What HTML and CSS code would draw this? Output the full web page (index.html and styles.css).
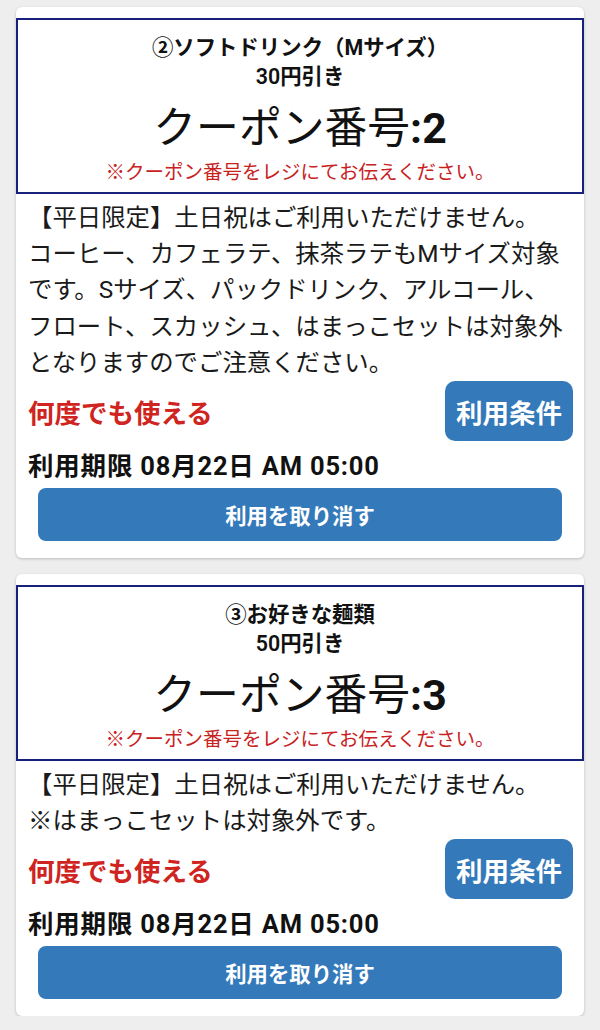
FILE: index.html
```html
<!DOCTYPE html>
<html lang="ja">
<head>
<meta charset="utf-8">
<title>クーポン</title>
<link rel="stylesheet" href="styles.css">
</head>
<body>
<main class="list">
  <section class="card">
    <div class="coupon-box">
      <div class="coupon-title">②ソフトドリンク（Mサイズ）</div>
      <div class="coupon-discount">30円引き</div>
      <div class="coupon-number">クーポン番号<b>:2</b></div>
      <div class="coupon-note">※クーポン番号をレジにてお伝えください。</div>
    </div>
    <div class="card-body">
      <p class="desc">【平日限定】土日祝はご利用いただけません。<br>コーヒー、カフェラテ、抹茶ラテもMサイズ対象です。Sサイズ、パックドリンク、アルコール、フロート、スカッシュ、はまっこセットは対象外となりますのでご注意ください。</p>
      <div class="usage-row">
        <span class="usage">何度でも使える</span>
        <button class="btn btn-terms">利用条件</button>
      </div>
      <div class="deadline">利用期限 08月22日 AM 05:00</div>
      <button class="btn btn-cancel">利用を取り消す</button>
    </div>
  </section>

  <section class="card">
    <div class="coupon-box">
      <div class="coupon-title">③お好きな麺類</div>
      <div class="coupon-discount">50円引き</div>
      <div class="coupon-number">クーポン番号<b>:3</b></div>
      <div class="coupon-note">※クーポン番号をレジにてお伝えください。</div>
    </div>
    <div class="card-body">
      <p class="desc">【平日限定】土日祝はご利用いただけません。<br>※はまっこセットは対象外です。</p>
      <div class="usage-row">
        <span class="usage">何度でも使える</span>
        <button class="btn btn-terms">利用条件</button>
      </div>
      <div class="deadline">利用期限 08月22日 AM 05:00</div>
      <button class="btn btn-cancel">利用を取り消す</button>
    </div>
  </section>
</main>
</body>
</html>
```

FILE: styles.css
```css
html, body {
  margin: 0;
  padding: 0;
  background: #eeeeee;
}

body {
  font-family: Roboto, "Noto Sans CJK JP", sans-serif;
  color: #1a1a1a;
}

.list {
  display: flex;
  flex-direction: column;
  gap: 16px;
  padding: 7px 16px 0 16px;
}

.card {
  background: #ffffff;
  border-radius: 6px;
  box-shadow: 0 1px 3px rgba(0, 0, 0, 0.22);
  padding: 11px 0 17px 0;
}

.coupon-box {
  border: 2px solid #17217c;
  padding: 12px 8px 6px 8px;
  text-align: center;
  color: #111;
}

.coupon-title {
  font-size: 21.4px;
  font-weight: 700;
  line-height: 32px;
}

.coupon-discount {
  font-size: 21.4px;
  font-weight: 600;
  line-height: 26px;
}

.coupon-number {
  font-size: 42.8px;
  line-height: 64px;
  margin-top: 6px;
  font-weight: 400;
}

.coupon-number b {
  font-weight: 700;
}

.coupon-note {
  font-size: 19.5px;
  line-height: 26px;
  color: #c8221f;
}

.card-body {
  padding: 6px 12px 0 12px;
  display: flex;
  flex-direction: column;
}

.desc {
  margin: 0;
  font-size: 24.4px;
  line-height: 36.2px;
  color: #1a1a1a;
}

.usage-row {
  display: flex;
  justify-content: space-between;
  align-items: center;
}

.usage {
  font-size: 26.5px;
  font-weight: 700;
  color: #cf2420;
}

.btn {
  border: none;
  background: #3479b9;
  color: #ffffff;
  font-family: Roboto, "Noto Sans CJK JP", sans-serif;
  font-weight: 700;
  cursor: pointer;
}

.btn-terms {
  height: 60px;
  padding: 0 11px;
  border-radius: 10px;
  font-size: 26.5px;
  margin-right: -1px;
}

.deadline {
  margin-top: 7px;
  font-size: 25.5px;
  letter-spacing: 0.8px;
  line-height: 36px;
  font-weight: 700;
  color: #111;
}

.btn-cancel {
  margin: 4px 10px 0 10px;
  height: 53px;
  border-radius: 8px;
  font-size: 21.4px;
}
```
